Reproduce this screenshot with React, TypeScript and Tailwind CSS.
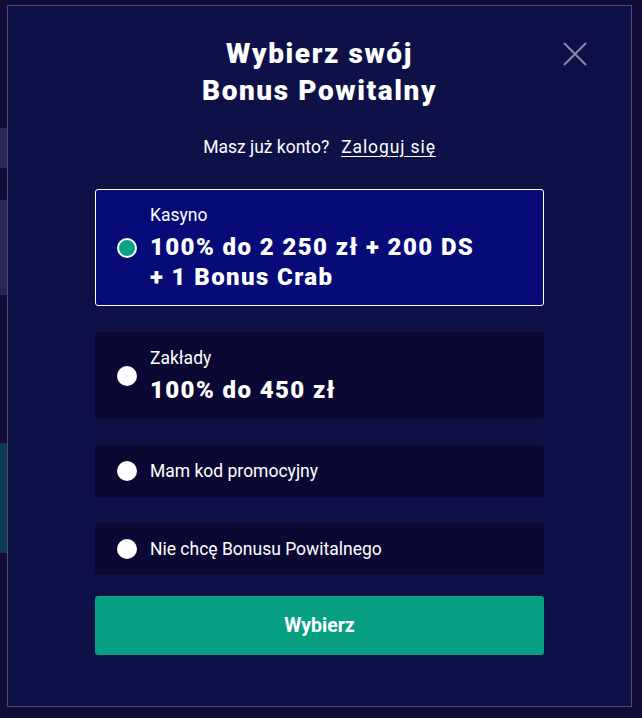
import { useState } from "react";

type Option = {
  id: string;
  label?: string;
  title: string;
};

const options: Option[] = [
  { id: "casino", label: "Kasyno", title: "100% do 2 250 zł + 200 DS\n+ 1 Bonus Crab" },
  { id: "sport", label: "Zakłady", title: "100% do 450 zł" },
  { id: "code", title: "Mam kod promocyjny" },
  { id: "none", title: "Nie chcę Bonusu Powitalnego" },
];

const Radio = ({ checked }: { checked: boolean }) => (
  <span
    className={`shrink-0 w-[20px] h-[20px] rounded-full ${
      checked ? "bg-[#0aa385] border-2 border-white" : "bg-white"
    }`}
  />
);

const App = () => {
  const [selected, setSelected] = useState("casino");

  return (
    <div className="relative w-[642px] h-[718px] overflow-hidden bg-[#120c38] font-['Roboto',sans-serif]">
      {/* blurred page behind the modal */}
      <div className="absolute left-0 top-[128px] w-[7px] h-[40px] bg-[#2c2756]" />
      <div className="absolute left-0 top-[200px] w-[7px] h-[95px] bg-[#2a2553]" />
      <div className="absolute left-0 top-[443px] w-[7px] h-[110px] bg-[#0d3a55]" />

      {/* Modal */}
      <div className="absolute left-[7px] top-[5px] w-[625px] h-[702px] bg-[#0e1147] border border-[#4b4a7c]">
        <button
          className="absolute right-[40px] top-[32px] w-[32px] h-[32px] flex items-center justify-center text-[#8787a8]"
          aria-label="Zamknij"
        >
          <svg width="24" height="24" viewBox="0 0 24 24" fill="none" stroke="currentColor" strokeWidth="2">
            <path d="M1 1 L23 23 M23 1 L1 23" />
          </svg>
        </button>

        <div className="flex flex-col px-[87px] pt-[29px]">
          <h2 className="text-center text-white font-black text-[28px] leading-[37px] tracking-[1.6px]">
            Wybierz swój
            <br />
            Bonus Powitalny
          </h2>

          <p className="mt-[28px] text-center text-white text-[17.5px] leading-[20px]">
            Masz już konto?
            <a className="ml-[12px] underline underline-offset-[3px] tracking-[0.9px] cursor-pointer">Zaloguj się</a>
          </p>

          <div className="mt-[32px] flex flex-col gap-[26px]">
            {options.map((o) => {
              const active = selected === o.id;
              return (
                <button
                  key={o.id}
                  onClick={() => setSelected(o.id)}
                  className={`flex items-center gap-[13px] pl-[21px] pr-4 text-left rounded-[3px] border ${
                    active ? "bg-[#070b78] border-white" : "bg-[#0b0933] border-transparent"
                  } ${o.label ? "py-[13px]" : "h-[52px]"}`}
                >
                  <Radio checked={active} />
                  {o.label ? (
                    <div className="flex flex-col text-white">
                      <span className="text-[17.5px] leading-[24px]">{o.label}</span>
                      <span className="mt-[5px] whitespace-pre-line font-black text-[24px] leading-[30px] tracking-[1.4px]">
                        {o.title}
                      </span>
                    </div>
                  ) : (
                    <span className="text-white text-[17.5px] leading-[20px]">{o.title}</span>
                  )}
                </button>
              );
            })}
          </div>

          <button className="mt-[21px] h-[59px] rounded-[3px] bg-[#07a083] text-white font-bold text-[19.5px]">
            Wybierz
          </button>
        </div>
      </div>
    </div>
  );
};

export default App;
